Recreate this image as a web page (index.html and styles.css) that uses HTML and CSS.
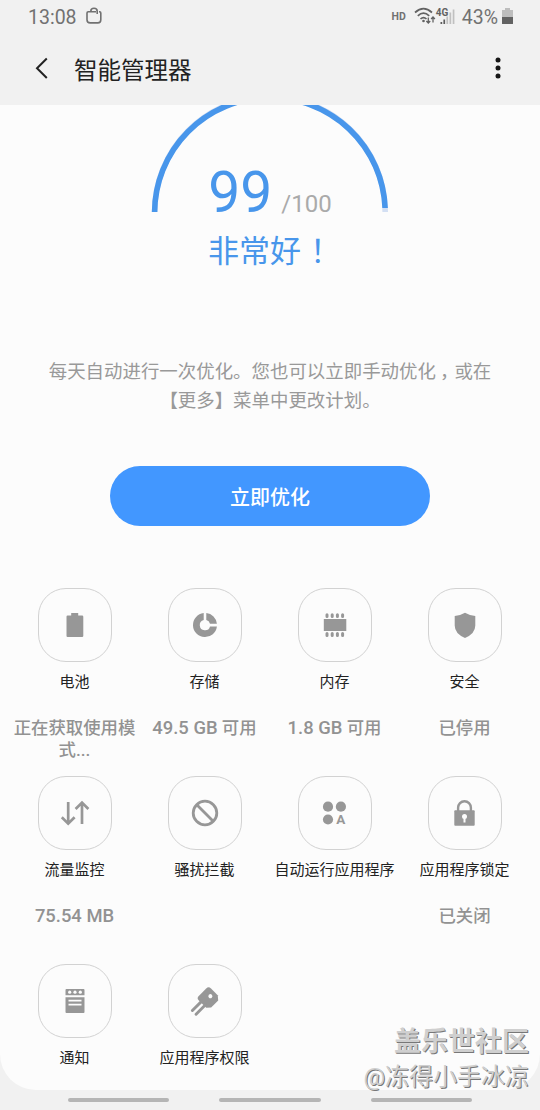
FILE: index.html
```html
<!DOCTYPE html>
<html lang="zh-CN">
<head>
  <meta charset="UTF-8" />
  <meta name="viewport" content="width=device-width, initial-scale=1" />
  <title>智能管理器</title>
  <link rel="stylesheet" href="styles.css">
</head>
<body>

  <header>
    <div class="status-bar">
      <span class="clock">13:08</span>
      <svg class="bag-icon" width="18" height="18" viewBox="0 0 18 18" fill="none" stroke="#717171" stroke-width="1.6">
        <path d="M6 4.8H3.2Q2 4.8 2 6V12.8Q2 15.9 5.2 15.9H12.8Q15.8 15.9 15.8 12.8V6Q15.8 4.8 14.6 4.8H14M6 4.8H11" />
        <path d="M5.8 5V4.2Q5.8 1.3 9 1.3T12.2 4.2V7" />
      </svg>
      <div class="status-right">
        <span class="hd">HD</span>
        <svg class="wifi-icon" width="22" height="18" viewBox="0 0 22 18" fill="none" stroke="#626262" stroke-width="1.7">
          <path d="M1 5.5Q9.5-2.3 18 5.5M3.8 8.8Q9.5 3.5 15.2 8.8M6.5 12Q9.5 9.2 12.5 12" />
          <circle cx="9.5" cy="14" r="1.3" fill="#626262" stroke="none" />
          <path d="M14.3 10.5V16M12.4 14L14.3 16L16.2 14M19 15.5V10M17.1 12L19 10L20.9 12" stroke-width="1.3" />
        </svg>
        <span class="signal">
          <span class="net">4G</span>
          <svg width="19" height="17" viewBox="0 0 19 17">
            <path d="M4.5 14h1.7v2H4.5zM7.4 11.5h1.7V16H7.4z" fill="#5d5d5d" />
            <path d="M10.4 8.5h1.7V16h-1.7zM13.5 4.5h1.7V16h-1.7zM16.7 1.5h1.7V16h-1.7z" fill="#c0c0c0" />
          </svg>
        </span>
        <span class="percent">43%</span>
        <svg class="battery-icon" width="11" height="17" viewBox="0 0 11 17">
          <path d="M3 0h5v2h3v7H0V2h3z" fill="#bdbdbd" />
          <path d="M0 9h11v6.5q0 .5-.5.5H.5q-.5 0-.5-.5z" fill="#626262" />
        </svg>
      </div>
    </div>
    <div class="title-bar">
      <svg class="back-btn" width="16" height="24" viewBox="0 0 16 24" fill="none" stroke="#222" stroke-width="2">
        <path d="M13.8 2.5L4 12.2L13.8 22" />
      </svg>
      <h1>智能管理器</h1>
      <svg class="more-btn" width="6" height="22" viewBox="0 0 6 22" fill="#161616">
        <circle cx="3" cy="3" r="2.5" />
        <circle cx="3" cy="11" r="2.5" />
        <circle cx="3" cy="19" r="2.5" />
      </svg>
    </div>
  </header>

  <main>
    <section class="score">
      <svg class="gauge" width="240" height="107" viewBox="0 11 240 107" fill="none" stroke-width="5.6">
        <path d="M4.6 118A115.3 115.3 0 0 1 235.2 118" stroke="#d3dff3" />
        <path d="M4.6 118A115.3 115.3 0 0 1 235.1 114" stroke="#4896eb" />
      </svg>
      <div class="score-value"><strong>99</strong><span>/100</span></div>
      <div class="score-text">非常好<span class="mark">！</span></div>
    </section>

    <p class="tip">每天自动进行一次优化。您也可以立即手动优化<span class="comma">，</span>或在<br>【更多】菜单中更改计划。</p>

    <button class="optimize-btn">立即优化</button>

    <section class="grid">
      <div class="item">
        <div class="tile">
          <svg width="30" height="30" viewBox="0 0 30 30">
            <path d="M11.2 3H18.2V5.5H22.1Q23.3 5.5 23.3 6.7V26Q23.3 27 22.1 27H7.6Q6.5 27 6.5 26V6.7Q6.5 5.5 7.6 5.5H11.2Z" />
          </svg>
        </div>
        <div class="name">电池</div>
        <div class="info">正在获取使用模式...</div>
      </div>
      <div class="item">
        <div class="tile">
          <svg width="30" height="30" viewBox="0 0 30 30">
            <path d="M13.7 3.1A12 12 0 1 0 26.9 16.4H20A5.2 5.2 0 1 1 13.7 10Z" />
            <path d="M16.3 3.1A12 12 0 0 1 26.9 13.8H20A5.2 5.2 0 0 0 16.3 10Z" />
          </svg>
        </div>
        <div class="name">存储</div>
        <div class="info"><span class="num">49.5 GB</span> 可用</div>
      </div>
      <div class="item">
        <div class="tile">
          <svg width="30" height="30" viewBox="0 0 30 30">
            <path d="M3.8 9H26.3V21H3.8Z" />
            <path d="M7 4.8V6.6M12.2 4.8V6.6M17.4 4.8V6.6M22.6 4.8V6.6M7 23.6V25.4M12.2 23.6V25.4M17.4 23.6V25.4M22.6 23.6V25.4" stroke="#979797" stroke-width="3" stroke-linecap="round" />
          </svg>
        </div>
        <div class="name">内存</div>
        <div class="info"><span class="num">1.8 GB</span> 可用</div>
      </div>
      <div class="item">
        <div class="tile">
          <svg width="30" height="30" viewBox="0 0 30 30">
            <path d="M15 2.7Q19 5.2 25.3 6V15.5Q25.3 23.5 15 28Q4.7 23.5 4.7 15.5V6Q11 5.2 15 2.7Z" />
          </svg>
        </div>
        <div class="name">安全</div>
        <div class="info">已停用</div>
      </div>

      <div class="item">
        <div class="tile">
          <svg class="line" width="30" height="30" viewBox="0 0 30 30">
            <path d="M8.2 4V25.4M1.8 19.2L8.2 25.6L14.6 19.2M22 26V4.6M15.6 11L22 4.6L28.4 11" stroke-width="2.7" />
          </svg>
        </div>
        <div class="name">流量监控</div>
        <div class="info"><span class="num">75.54 MB</span></div>
      </div>
      <div class="item">
        <div class="tile">
          <svg class="line" width="30" height="30" viewBox="0 0 30 30">
            <circle cx="15" cy="15" r="11.8" stroke-width="2.8" />
            <path d="M6.8 6.8L23.2 23.2" stroke-width="2.8" />
          </svg>
        </div>
        <div class="name">骚扰拦截</div>
      </div>
      <div class="item">
        <div class="tile">
          <svg width="30" height="30" viewBox="0 0 30 30">
            <circle cx="8" cy="8.7" r="5.1" />
            <circle cx="20.9" cy="8.7" r="5.1" />
            <circle cx="8" cy="21.5" r="5.1" />
            <text x="20.9" y="26.4" text-anchor="middle">A</text>
          </svg>
        </div>
        <div class="name">自动运行应用程序</div>
      </div>
      <div class="item">
        <div class="tile">
          <svg width="30" height="30" viewBox="0 0 30 30">
            <path d="M8.1 14V9.8A6.4 6.6 0 0 1 20.9 9.8V14" fill="none" stroke="#979797" stroke-width="2.4" />
            <path d="M5.2 12.3H23.8Q24.7 12.3 24.7 13.2V26.8Q24.7 27.7 23.8 27.7H5.2Q4.3 27.7 4.3 26.8V13.2Q4.3 12.3 5.2 12.3Z" />
            <circle cx="14.5" cy="18.5" r="2.5" fill="#fcfcfc" />
            <path d="M13.5 19h2v5.5h-2z" fill="#fcfcfc" />
          </svg>
        </div>
        <div class="name">应用程序锁定</div>
        <div class="info">已关闭</div>
      </div>

      <div class="item">
        <div class="tile">
          <svg width="30" height="30" viewBox="0 0 30 30">
            <path d="M6.4 3H23.6Q24.5 3 24.5 4V9.3H5.5V4Q5.5 3 6.4 3ZM5.5 11.3H24.5V26Q24.5 27 23.6 27H6.4Q5.5 27 5.5 26Z" />
            <g fill="#fcfcfc">
              <circle cx="9.7" cy="6.2" r="1.6" />
              <circle cx="15" cy="6.2" r="1.6" />
              <circle cx="20.3" cy="6.2" r="1.6" />
              <path d="M8.5 13.8h13v1.6h-13zM8.5 17.8h13v1.6h-13z" />
            </g>
          </svg>
        </div>
        <div class="name">通知</div>
      </div>
      <div class="item">
        <div class="tile">
          <svg width="30" height="30" viewBox="0 0 30 30">
            <g transform="translate(18.6 12) rotate(45)">
              <path d="M-5-8.4H4.5L8.6-5V5L5.2 8.6H-5.5Q-8.4 8.6-8.4 5.5V-5Q-8.4-8.4-5-8.4Z" />
              <path d="M-2.6 7V20.3M2.6 7V20.3" stroke="#979797" stroke-width="2.9" stroke-linecap="round" />
              <circle cx="0" cy="-2.5" r="2" fill="#fcfcfc" />
            </g>
          </svg>
        </div>
        <div class="name">应用程序权限</div>
      </div>
    </section>
  </main>

  <nav>
    <span></span>
    <span></span>
    <span></span>
  </nav>

  <div class="watermark">
    <div class="site">盖乐世社区</div>
    <div class="user">@冻得小手冰凉</div>
  </div>

</body>
</html>
```

FILE: styles.css
```css
* {
  box-sizing: border-box;
}
body {
  font-family: Roboto, "Noto Sans CJK SC", sans-serif;
  background: #f1f1f1;
  margin: 0;
  height: 1110px;
  position: relative;
  overflow: hidden;
  color: #222;
}
svg {
  display: block;
  flex: none;
}
header {
  height: 105px;
}
.status-bar {
  display: flex;
  align-items: center;
  height: 34px;
  padding: 0 27px 0 28px;
  color: #717171;
}
.clock,
.percent {
  font-size: 19.5px;
  line-height: 32px;
  padding-top: 2px;
}
.bag-icon {
  margin: 0 0 2px 8px;
}
.status-right {
  display: flex;
  align-items: center;
  margin-left: auto;
}
.hd {
  font-size: 10.5px;
  font-weight: 700;
  margin: 0 8px 2px 0;
}
.wifi-icon {
  margin-bottom: 2px;
}
.signal {
  position: relative;
  margin: 0 7px 1px 0;
}
.net {
  position: absolute;
  left: 0;
  top: 0;
  font-size: 10px;
  line-height: 9px;
  font-weight: 700;
  color: #626262;
}
.percent {
  margin-right: 4px;
}
.battery-icon {
  margin-bottom: 1px;
}
.title-bar {
  display: flex;
  align-items: center;
  height: 70px;
  padding: 0 39px 0 33px;
}
h1 {
  font-size: 23.5px;
  font-weight: 400;
  line-height: 36px;
  margin: 3px auto 0 25px;
}
.back-btn,
.more-btn {
  margin-bottom: 2px;
}
main {
  height: 985px;
  background: #fcfcfc;
  border-radius: 0 0 36px 36px;
  overflow: hidden;
}
.score {
  display: grid;
  justify-items: center;
  grid-template-rows: 107px 72px;
  color: #4896eb;
}
.gauge {
  grid-area: 1 / 1;
}
.score-value {
  grid-area: 1 / 1;
  align-self: end;
  display: flex;
  align-items: baseline;
  line-height: 66px;
  margin-bottom: -25px;
}
.score-value strong {
  font-size: 57px;
  font-weight: 400;
}
.score-value span {
  font-size: 24px;
  color: #aaa;
  margin-left: 9px;
}
.score-text {
  font-size: 31px;
  line-height: 46px;
  padding-top: 17px;
}
.mark {
  margin-left: 9px;
  letter-spacing: -9px;
}
.tip {
  margin: 74px 0 0;
  font-size: 18.45px;
  line-height: 28.5px;
  text-align: center;
  white-space: nowrap;
  color: #999;
}
.comma {
  margin-left: 4px;
  letter-spacing: -4px;
}
.optimize-btn {
  display: block;
  width: 320px;
  height: 60px;
  margin: 51px auto 0;
  padding: 0;
  border: none;
  border-radius: 30px;
  background: #4297ff;
  color: white;
  font-family: inherit;
  font-size: 20px;
  font-weight: 500;
}
.grid {
  display: grid;
  grid-template-columns: repeat(4, 130px);
  grid-auto-rows: 188px;
  margin: 62px 0 0 9.5px;
}
.item {
  display: flex;
  flex-direction: column;
  align-items: center;
}
.tile {
  display: flex;
  align-items: center;
  justify-content: center;
  width: 74px;
  height: 74px;
  border: 1.5px solid #d2d2d2;
  border-radius: 28px;
}
.tile svg {
  fill: #979797;
}
.tile .line {
  fill: none;
  stroke: #979797;
}
.tile text {
  font-size: 13.5px;
  font-weight: 700;
}
.name {
  font-size: 15px;
  line-height: 22px;
  margin-top: 9px;
  white-space: nowrap;
}
.info {
  width: 124px;
  margin-top: 25px;
  font-size: 17.4px;
  font-weight: 500;
  line-height: 21.5px;
  text-align: center;
  color: #929292;
}
.num {
  font-size: 18.4px;
  line-height: 1;
}
nav {
  display: flex;
  justify-content: center;
  gap: 50px;
  padding-top: 8px;
}
nav span {
  width: 101.5px;
  height: 4px;
  border-radius: 2px;
  background: #b5b5b5;
}
.watermark {
  position: absolute;
  right: 11px;
  bottom: 15px;
  text-align: right;
  color: #cfcfcf;
  text-shadow: 1px 1px 0 #777;
}
.site {
  font-size: 27px;
  font-weight: 700;
  line-height: 35px;
}
.user {
  font-size: 24px;
  line-height: 35px;
}
```
